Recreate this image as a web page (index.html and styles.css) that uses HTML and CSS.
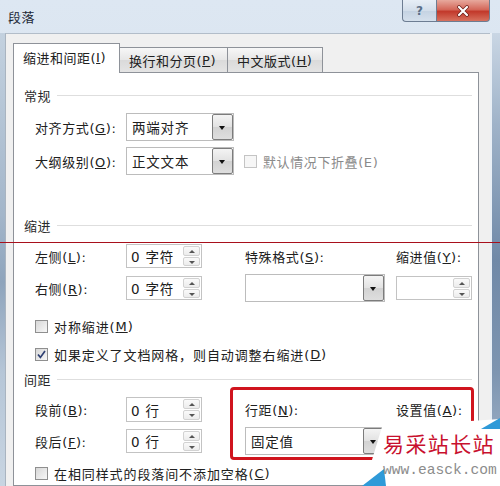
FILE: index.html
```html
<!DOCTYPE html>
<html lang="zh-CN">
<head>
<meta charset="utf-8">
<title>段落</title>
<link rel="stylesheet" href="styles.css">
</head>
<body>
<div class="window">
  <div class="titlebar">
    <span class="title">段落</span>
    <div class="caption">
      <div class="cbtn help">?</div>
      <div class="cbtn close">
        <svg width="14" height="12" viewBox="0 0 14 12"><path d="M3 2 L11 10 M11 2 L3 10" stroke="#6b1d16" stroke-width="3.6" stroke-linecap="round"/><path d="M3 2 L11 10 M11 2 L3 10" stroke="#ffffff" stroke-width="2.2" stroke-linecap="round"/></svg>
      </div>
    </div>
  </div>
  <div class="body">
    <div class="lframe"></div>
    <div class="client">
      <div class="tabs">
        <div class="tab active t1">缩进和间距(<u>I</u>)</div>
        <div class="tab t2">换行和分页(<u>P</u>)</div>
        <div class="tab t3">中文版式(<u>H</u>)</div>
      </div>
      <div class="panel">
        <div class="ghead g1"><span>常规</span><i></i></div>
        <div class="frow r1">
          <span class="lbl">对齐方式(<u>G</u>):</span>
          <div class="select s108"><span>两端对齐</span><b></b></div>
        </div>
        <div class="frow r2">
          <span class="lbl">大纲级别(<u>O</u>):</span>
          <div class="select s108"><span>正文文本</span><b></b></div>
          <span class="chk dis"></span><span class="distext">默认情况下折叠(E)</span>
        </div>
        <div class="ghead g2"><span>缩进</span><i></i></div>
        <div class="fgrid indent">
          <span class="lbl">左侧(<u>L</u>):</span>
          <div class="spin"><span>0 字符</span><b class="sb"><i class="up"></i><i class="dn"></i></b></div>
          <span class="lbl">特殊格式(<u>S</u>):</span>
          <span class="lbl">缩进值(<u>Y</u>):</span>
          <span class="lbl">右侧(<u>R</u>):</span>
          <div class="spin"><span>0 字符</span><b class="sb"><i class="up"></i><i class="dn"></i></b></div>
          <div class="select s140"><span></span><b></b></div>
          <div class="spin"><span></span><b class="sb"><i class="up"></i><i class="dn"></i></b></div>
        </div>
        <div class="cb c1"><span class="chk"></span>对称缩进(<u>M</u>)</div>
        <div class="cb c2"><span class="chk on"><svg width="11" height="11" viewBox="0 0 11 11"><path d="M2 5.5 L4.4 8.4 L9 2" fill="none" stroke="#2e3f72" stroke-width="1.7"/></svg></span>如果定义了文档网格，则自动调整右缩进(<u>D</u>)</div>
        <div class="ghead g3"><span>间距</span><i></i></div>
        <div class="fgrid spacing">
          <span class="lbl">段前(<u>B</u>):</span>
          <div class="spin sp25"><span>0 行</span><b class="sb"><i class="up"></i><i class="dn"></i></b></div>
          <span class="lbl">行距(<u>N</u>):</span>
          <span class="lbl">设置值(<u>A</u>):</span>
          <span class="lbl">段后(<u>F</u>):</span>
          <div class="spin"><span>0 行</span><b class="sb"><i class="up"></i><i class="dn"></i></b></div>
          <div class="select s140"><span>固定值</span><b></b></div>
          <div class="spin"><span></span><b class="sb"><i class="up"></i><i class="dn"></i></b></div>
        </div>
        <div class="cb c3"><span class="chk"></span>在相同样式的段落间不添加空格(<u>C</u>)</div>
      </div>
    </div>
    <div class="rframe"></div>
  </div>

  <div class="redline"></div>
  <div class="redbox"></div>

  <div class="watermark">
    <div class="wm-shape"></div>
    <div class="wm-tri wm-tri1"></div>
    <div class="wm-tri wm-tri2"></div>
    <div class="wm-text">
      <div class="wm-cn">易采站长站</div>
      <div class="wm-url">www.easck.com</div>
    </div>
  </div>
</div>
</body>
</html>
```

FILE: styles.css
```css
* { box-sizing: border-box; }
html, body { margin: 0; padding: 0; }
body {
  width: 500px;
  height: 486px;
  overflow: hidden;
  font-family: "DejaVu Sans", "Noto Sans CJK SC", sans-serif;
  font-size: 13px;
  color: #202020;
}
u { text-decoration: underline; text-underline-offset: 1px; }

.window {
  position: relative;
  width: 500px;
  height: 486px;
  overflow: hidden;
  display: flex;
  flex-direction: column;
  background: linear-gradient(#dde7f2, #cfdbe8);
}

/* title bar */
.titlebar {
  height: 33px;
  flex: none;
  display: flex;
  justify-content: space-between;
  align-items: flex-start;
}
.title {
  padding-left: 8px;
  line-height: 36px;
  font-size: 13px;
  letter-spacing: 0.6px;
  color: #1c2736;
}
.caption { display: flex; margin-right: 10px; }
.cbtn {
  height: 22px;
  display: flex;
  align-items: center;
  justify-content: center;
  border: 1px solid #6d7d92;
  border-top: none;
}
.help {
  width: 34px;
  border-right: none;
  border-radius: 0 0 0 4px;
  background: linear-gradient(#e7eef6, #d3deea 50%, #c4d2e2 51%, #d5e0ec);
  color: #5a6f88;
  font-weight: bold;
  font-size: 12px;
}
.close {
  width: 54px;
  border-radius: 0 0 4px 0;
  background: linear-gradient(#e7a99d, #d4685a 45%, #c2392b 55%, #d7715e);
}

/* body */
.body { flex: 1; display: flex; min-height: 0; }
.lframe {
  width: 5px;
  flex: none;
  background: linear-gradient(#c3d1df, #a3b6ca 40%, #8ea4bc 55%, #b6c6d7 75%, #c8d5e2);
}
.client {
  width: 485px;
  flex: none;
  background: #f0f0f0;
  border-left: 1px solid #a9b4c0;
  border-top: 1px solid #b2bdc9;
  padding: 9px 0 0 7px;
  display: flex;
  flex-direction: column;
}
.rframe {
  flex: 1;
  background:
    linear-gradient(to right, #e9eff5 0 2px, transparent 2px),
    linear-gradient(#c9d6e4, #9fb3c9 20%, #6f89a8 50%, #7d95b1 75%, #a9bbcf);
}

/* tabs */
.tabs {
  display: flex;
  align-items: flex-end;
  height: 29px;
  flex: none;
  position: relative;
  z-index: 1;
}
.tab {
  height: 25px;
  padding-left: 9px;
  display: flex;
  align-items: center;
  border: 1px solid #8e9299;
  border-left: none;
  border-bottom: none;
  background: linear-gradient(#f7f7f7, #e6e6e6 50%, #dadada 51%, #e4e4e4);
  letter-spacing: 0.5px;
}
.tab.active {
  height: 30px;
  margin-bottom: -1px;
  border-left: 1px solid #8e9299;
  background: #fff;
  padding-left: 9px;
  padding-bottom: 2px;
}
.t1 { width: 107px; }
.t2 { width: 108px; }
.t3 { width: 95px; }

/* panel */
.panel {
  width: 466px;
  flex: 1;
  background: #fff;
  border: 1px solid #8e9299;
  padding: 0 6px 0 10px;
  display: flex;
  flex-direction: column;
}
.lbl { letter-spacing: 0.6px; white-space: nowrap; }

.ghead {
  height: 20px;
  display: flex;
  align-items: center;
  flex: none;
  letter-spacing: 0.6px;
  color: #2a2a2a;
}
.ghead i { flex: 1; height: 1px; background: #dedede; margin-left: 6px; }
.g1 { margin-top: 12px; }
.g2 { margin-top: 40px; }
.g3 { margin-top: 5px; }

.frow {
  display: flex;
  align-items: center;
  padding-left: 11px;
  height: 28px;
  flex: none;
}
.frow .lbl { width: 91px; }
.r1 { margin-top: 8px; }
.r2 { margin-top: 6px; }

/* select */
.select {
  height: 28px;
  border: 1px solid #bcbcbc;
  background: #fff;
  display: flex;
  align-items: center;
  padding-left: 5px;
  position: relative;
  font-size: 13.5px;
  letter-spacing: 0.8px;
}
.select span { flex: 1; }
.select b {
  width: 21px;
  height: 26px;
  border: 1px solid #7c7c7c;
  border-radius: 2px;
  background: linear-gradient(#f4f4f4, #e2e2e2 50%, #d2d2d2 51%, #dedede);
  position: relative;
}
.select b::after {
  content: "";
  position: absolute;
  left: 6px;
  top: 11px;
  border-left: 3.5px solid transparent;
  border-right: 3.5px solid transparent;
  border-top: 4px solid #111;
}
.s108 { width: 108px; }
.s140 { width: 140px; }

/* checkbox */
.chk {
  width: 13px;
  height: 13px;
  flex: none;
  border: 1px solid #8f8f8f;
  background: linear-gradient(135deg, #d7d7d7, #f7f7f7);
  display: inline-flex;
  align-items: center;
  justify-content: center;
  margin-right: 6px;
}
.chk.dis { border-color: #c4c4c4; background: #f6f6f6; margin-left: 10px; }
.distext { color: #8a8a8a; letter-spacing: 0.6px; }

.cb {
  display: flex;
  align-items: center;
  padding-left: 11px;
  height: 20px;
  flex: none;
  letter-spacing: 0.9px;
  white-space: nowrap;
}
.c1 { margin-top: 14px; }
.c2 { margin-top: 8px; }
.c3 { margin-top: 8px; }

/* grid rows */
.fgrid {
  display: grid;
  grid-template-columns: 91px 119px 151px 76px;
  align-items: center;
  padding-left: 11px;
  flex: none;
}
.indent { margin-top: 9px; grid-template-rows: 24px 28px; row-gap: 6px; }
.spacing { margin-top: 8px; grid-template-rows: 25px 28px; row-gap: 5px; }

/* spin box */
.spin {
  width: 76px;
  height: 24px;
  border: 1px solid #c3c3c3;
  background: #fff;
  display: flex;
  align-items: center;
  padding-left: 4px;
  font-size: 13.5px;
  letter-spacing: 0.8px;
}
.sp25 { height: 25px; }
.spin span { flex: 1; }
.sb {
  width: 18px;
  height: 100%;
  display: flex;
  flex-direction: column;
  padding: 1px 1px 1px 0;
  gap: 1px;
}
.sb i {
  flex: 1;
  border: 1px solid #d2d2d2;
  border-radius: 2px;
  background: linear-gradient(#fafafa, #ececec);
  position: relative;
}
.sb i::after {
  content: "";
  position: absolute;
  left: 5px;
  border-left: 3px solid transparent;
  border-right: 3px solid transparent;
}
.sb .up::after { top: 3px; border-bottom: 3px solid #555; }
.sb .dn::after { top: 3px; border-top: 3px solid #555; }

/* annotations */
.redline {
  position: absolute;
  left: 0;
  top: 242px;
  width: 500px;
  height: 1px;
  background: #a8101c;
}
.redbox {
  position: absolute;
  left: 230px;
  top: 387px;
  width: 244px;
  height: 73px;
  border: 3px solid #d0141e;
  border-radius: 4px;
}

/* watermark */
.watermark {
  position: absolute;
  left: 360px;
  top: 414px;
  width: 140px;
  height: 72px;
}
.wm-shape {
  position: absolute;
  inset: 0;
  background: #fff;
  clip-path: polygon(22px 13px, 140px 5px, 140px 72px, 4px 72px);
}
.wm-tri { position: absolute; inset: 0; background: #2f9ad8; }
.wm-tri1 { clip-path: polygon(121px 15px, 140px 4px, 140px 15px); }
.wm-tri2 { clip-path: polygon(2px 72px, 24px 55px, 26px 72px); }
.wm-text {
  position: relative;
  padding: 15px 0 0 23px;
  white-space: nowrap;
}
.wm-cn {
  font-family: "Noto Sans CJK SC", sans-serif;
  font-size: 21px;
  line-height: 28px;
  letter-spacing: 1.4px;
  color: #c8102e;
}
.wm-url {
  font-family: "Liberation Mono", monospace;
  font-size: 14.6px;
  line-height: 20px;
  margin-top: 3px;
  color: #8c8c8c;
}
```
